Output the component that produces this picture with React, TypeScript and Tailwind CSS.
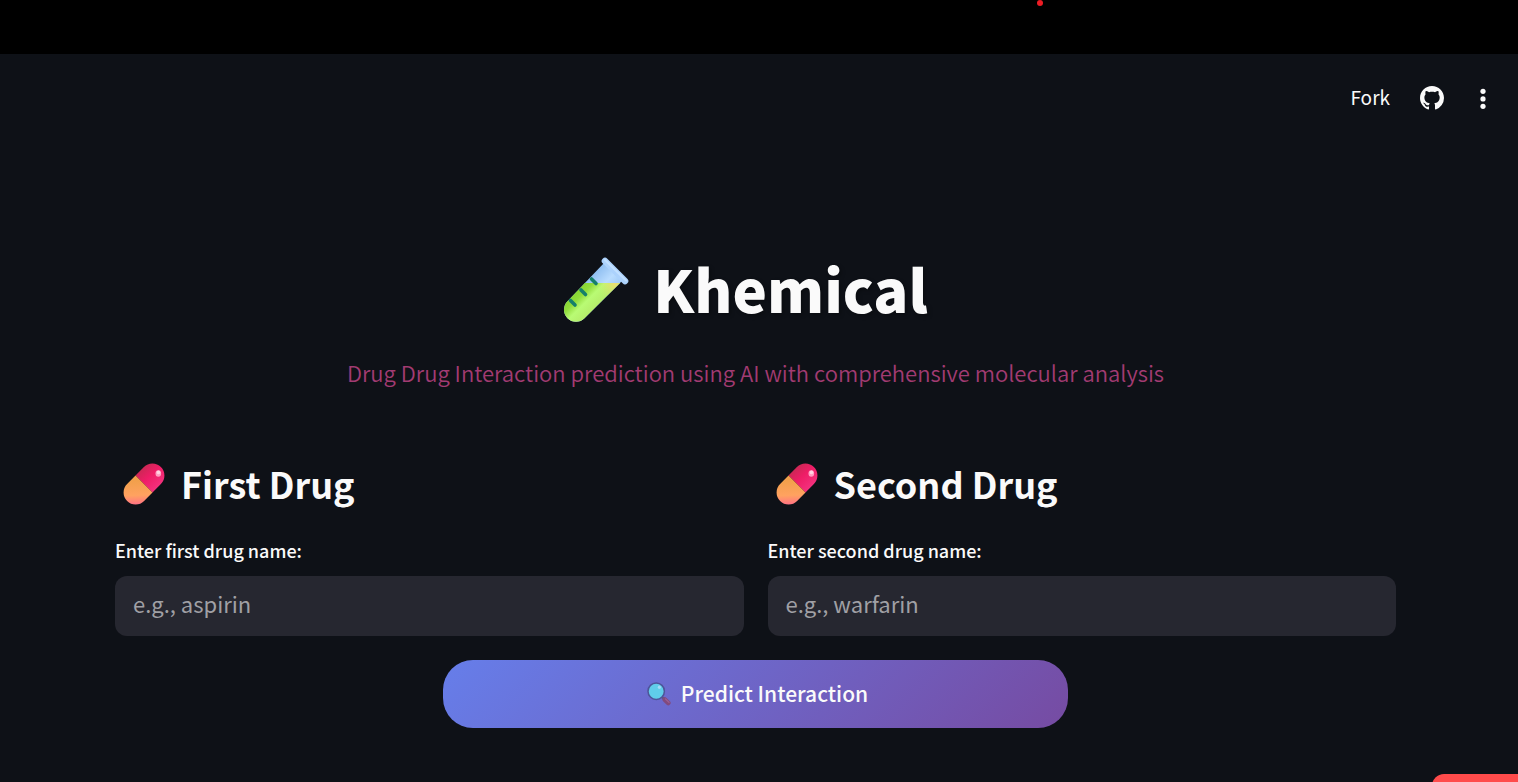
import { useId } from "react";

function TestTube() {
  return (
    <svg viewBox="0 0 66 66" className="h-[66px] w-[66px] shrink-0" aria-hidden="true">
      <defs>
        <linearGradient id="glass" x1="34" y1="12" x2="54" y2="32" gradientUnits="userSpaceOnUse">
          <stop offset="0" stopColor="#8dbdf0" />
          <stop offset="0.55" stopColor="#b9dcff" />
          <stop offset="1" stopColor="#9cc8f5" />
        </linearGradient>
        <linearGradient id="liquid" x1="16" y1="30" x2="34" y2="48" gradientUnits="userSpaceOnUse">
          <stop offset="0" stopColor="#86d32f" />
          <stop offset="0.3" stopColor="#91dc3c" />
          <stop offset="0.6" stopColor="#b9fb74" />
          <stop offset="1" stopColor="#b5ee6b" />
        </linearGradient>
        <radialGradient id="glow" cx="52" cy="26" r="18" gradientUnits="userSpaceOnUse">
          <stop offset="0" stopColor="#efdc70" />
          <stop offset="1" stopColor="#d5ea70" stopOpacity="0" />
        </radialGradient>
        <clipPath id="tube">
          <path d="M41 6 L59 24 L21.5 61.3 A12 12 0 0 1 4.5 44.3 Z" />
        </clipPath>
      </defs>
      <g clipPath="url(#tube)">
        <rect width="66" height="66" fill="url(#glass)" />
        <path d="M0 26 H66 V66 H0 Z" fill="url(#liquid)" />
        <path d="M0 26 H66 V66 H0 Z" fill="url(#glow)" />
      </g>
      <path d="M28.5 22 L33 26.5 M18 33 L22.5 37.5 M7.5 43.5 L12 48" stroke="#15806b" strokeWidth="3.6" strokeLinecap="round" />
      <path d="M42 4 L62 24" stroke="#acd2fc" strokeWidth="6.6" strokeLinecap="round" />
      <path d="M42 3 L63 23.5" stroke="#c2e0ff" strokeWidth="2" strokeLinecap="round" />
    </svg>
  );
}

function Pill() {
  const id = useId();
  return (
    <svg viewBox="0 -1 42 42" className="h-[42px] w-[42px] shrink-0 overflow-visible" aria-hidden="true">
      <defs>
        <linearGradient id={`${id}r`} x1="17" y1="5" x2="34" y2="24" gradientUnits="userSpaceOnUse">
          <stop offset="0" stopColor="#c72952" />
          <stop offset="0.5" stopColor="#ef1d67" />
          <stop offset="1" stopColor="#f3307c" />
        </linearGradient>
        <linearGradient id={`${id}o`} x1="12" y1="18" x2="13" y2="42" gradientUnits="userSpaceOnUse">
          <stop offset="0" stopColor="#f2a04c" />
          <stop offset="0.6" stopColor="#ffa260" />
          <stop offset="1" stopColor="#ff6f86" />
        </linearGradient>
      </defs>
      <path d="M12.5 12.5 L20.9 4.1 A12 12 0 0 1 37.9 21.1 L29.5 29.5 Z" fill={`url(#${id}r)`} />
      <path d="M12.5 12.5 L29.5 29.5 L21.1 37.9 A12 12 0 0 1 4.1 20.9 Z" fill={`url(#${id}o)`} />
      <ellipse cx="35.3" cy="10.5" rx="2.8" ry="3.3" fill="#ff9fc2" />
      <circle cx="35.5" cy="9.4" r="1.8" fill="#ffd4e2" />
    </svg>
  );
}

function Magnifier() {
  return (
    <svg viewBox="0 0 24 24" className="h-6 w-6 shrink-0" aria-hidden="true">
      <path d="M14.5 14.5 L18 18" stroke="#5c5884" strokeWidth="2.4" />
      <path d="M17.7 17.5 L21.3 21" stroke="#814a7e" strokeWidth="4.6" strokeLinecap="round" />
      <path d="M18.5 17 L22 20.3" stroke="#9a5e94" strokeWidth="1.4" strokeLinecap="round" />
      <circle cx="9.2" cy="9.2" r="8.2" fill="#60cdea" stroke="#4d5599" strokeWidth="1.5" />
      <ellipse cx="12.3" cy="5.2" rx="1.5" ry="1.8" fill="#a5dcf6" />
    </svg>
  );
}

function GithubMark() {
  return (
    <svg viewBox="0 0 16 16" className="h-6 w-6" fill="#fafafa" aria-hidden="true">
      <path d="M8 0C3.58 0 0 3.58 0 8c0 3.54 2.29 6.53 5.47 7.59.4.07.55-.17.55-.38 0-.19-.01-.82-.01-1.49-2.01.37-2.53-.49-2.69-.94-.09-.23-.48-.94-.82-1.13-.28-.15-.68-.52-.01-.53.63-.01 1.08.58 1.23.82.72 1.21 1.87.87 2.33.66.07-.52.28-.87.51-1.07-1.78-.2-3.64-.89-3.64-3.95 0-.87.31-1.59.82-2.15-.08-.2-.36-1.02.08-2.12 0 0 .67-.21 2.2.82.64-.18 1.32-.27 2-.27s1.36.09 2 .27c1.53-1.04 2.2-.82 2.2-.82.44 1.1.16 1.92.08 2.12.51.56.82 1.27.82 2.15 0 3.07-1.87 3.75-3.65 3.95.29.25.54.73.54 1.48 0 1.07-.01 1.93-.01 2.2 0 .21.15.46.55.38A8.01 8.01 0 0 0 16 8c0-4.42-3.58-8-8-8Z" />
    </svg>
  );
}

function DrugField({ title, label, placeholder }: { title: string; label: string; placeholder: string }) {
  const id = useId();
  return (
    <div className="min-w-0">
      <h3 className="flex items-center gap-4 pl-2 text-[36px] leading-[50px] font-semibold">
        <Pill />
        {title}
      </h3>
      <label htmlFor={id} className="mt-[26px] block text-[18px] leading-8 font-medium">
        {label}
      </label>
      <input
        id={id}
        type="text"
        placeholder={placeholder}
        className="mt-[10px] block h-15 w-full rounded-xl bg-[#262730] px-[18px] pb-1.5 text-[22px] text-[#fafafa] outline-none placeholder:text-[#a0a0a5]"
      />
    </div>
  );
}

export default function App() {
  return (
    <div className="flex min-h-screen flex-col bg-[#0e1117] font-['Noto_Sans_CJK_SC','Noto_Sans',sans-serif] text-[#fafafa]">
      <div className="relative h-[54px] bg-black">
        <span className="absolute top-0 left-[1037px] h-[6px] w-[6px] rounded-full bg-[#ed1c24]" />
      </div>

      <header className="flex h-[88px] items-center justify-end pr-[23px]">
        <button type="button" className="pb-0.5 text-[19px] leading-8">Fork</button>
        <a href="#github" aria-label="View source on GitHub" className="ml-[30px]">
          <GithubMark />
        </a>
        <button type="button" aria-label="Open menu" className="ml-[27px]">
          <svg viewBox="0 0 24 24" className="h-6 w-6" fill="#fafafa" aria-hidden="true">
            <circle cx="12" cy="5.3" r="2.6" />
            <circle cx="12" cy="12.9" r="2.6" />
            <circle cx="12" cy="20.3" r="2.6" />
          </svg>
        </button>
      </header>

      <main className="grow pt-[106px] pr-[122px] pb-[54px] pl-[115px]">
        <h1 className="flex items-center justify-center gap-6 pr-5 text-[58px] leading-[80px] font-black [text-shadow:2px_2px_4px_rgba(0,0,0,0.3)]">
          <TestTube />
          <span className="pb-1">Khemical</span>
        </h1>
        <p className="mt-[22px] text-center text-[22px] leading-9 font-[350] text-[#a23b72]">
          Drug Drug Interaction prediction using AI with comprehensive molecular analysis
        </p>

        <div className="mt-[68px] grid grid-cols-2 gap-6">
          <DrugField title="First Drug" label="Enter first drug name:" placeholder="e.g., aspirin" />
          <DrugField title="Second Drug" label="Enter second drug name:" placeholder="e.g., warfarin" />
        </div>

        <div className="mt-6 grid grid-cols-[1fr_2fr_1fr] gap-4">
          <button
            type="button"
            className="col-start-2 flex h-[68px] items-center justify-center gap-[10px] rounded-[30px] bg-[linear-gradient(135deg,#667eea_0%,#764ba2_100%)] pl-1 text-[21px] font-medium"
          >
            <Magnifier />
            Predict Interaction
          </button>
        </div>
      </main>

      <div className="fixed right-0 bottom-0 h-2 w-[86px] overflow-hidden">
        <div className="h-6 rounded-tl-xl bg-[#ff4b4b]" />
      </div>
    </div>
  );
}
